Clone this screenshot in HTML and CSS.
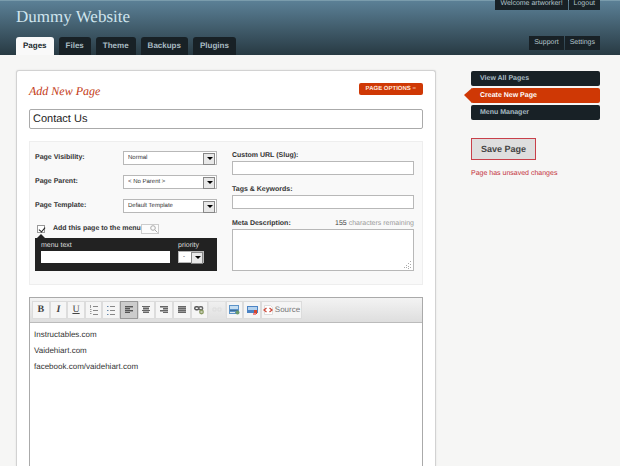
FILE: index.html
```html
<!DOCTYPE html>
<html lang="en">
<head>
    <meta charset="UTF-8" />
    <title>Dummy Website</title>
    <meta name="viewport" content="width=device-width, initial-scale=1.0" />
    <link rel="stylesheet" href="styles.css">
</head>
<body>

    <header class="header">
        <div class="header-row">
            <h1>Dummy Website</h1>
            <nav class="user-nav" aria-label="Account">
                <a href="#">Welcome artworker!</a>
                <a href="#">Logout</a>
            </nav>
        </div>
        <div class="header-row header-bottom">
            <nav class="tabs" aria-label="Main">
                <a href="#" class="active">Pages</a>
                <a href="#">Files</a>
                <a href="#">Theme</a>
                <a href="#">Backups</a>
                <a href="#">Plugins</a>
            </nav>
            <nav class="user-nav tools-nav" aria-label="Tools">
                <a href="#">Support</a>
                <a href="#">Settings</a>
            </nav>
        </div>
    </header>

    <div class="wrapper">
        <main class="card">
            <div class="card-head">
                <h2>Add New Page</h2>
                <button type="button" class="options-btn">PAGE OPTIONS &minus;</button>
            </div>

            <input type="text" class="page-title" aria-label="Page title" value="Contact Us" />

            <div class="options">
                <div class="column">
                    <div class="field-row">
                        <label for="visibility">Page Visibility:</label>
                        <span class="select"><select id="visibility"><option>Normal</option></select></span>
                    </div>
                    <div class="field-row">
                        <label for="parent">Page Parent:</label>
                        <span class="select"><select id="parent"><option>&lt; No Parent &gt;</option></select></span>
                    </div>
                    <div class="field-row">
                        <label for="template">Page Template:</label>
                        <span class="select"><select id="template"><option>Default Template</option></select></span>
                    </div>
                    <div class="menu-check">
                        <input type="checkbox" id="inMenu" checked />
                        <label for="inMenu">Add this page to the menu</label>
                        <button type="button" class="search-btn" aria-label="Search">
                            <svg width="8" height="8" viewBox="0 0 8 8" fill="none" stroke="#aaa"><circle cx="3" cy="3" r="2.3" /><path d="M4.8 4.8 7.5 7.5" /></svg>
                        </button>
                    </div>
                    <div class="menu-box">
                        <div class="menu-text">
                            <label for="menuText">menu text</label>
                            <input type="text" id="menuText" />
                        </div>
                        <div class="menu-priority">
                            <label for="priority">priority</label>
                            <span class="select small"><select id="priority"><option>-</option></select></span>
                        </div>
                    </div>
                </div>

                <div class="column">
                    <div class="field">
                        <label for="slug">Custom URL (Slug):</label>
                        <input type="text" id="slug" />
                    </div>
                    <div class="field">
                        <label for="tags">Tags &amp; Keywords:</label>
                        <input type="text" id="tags" />
                    </div>
                    <div class="field">
                        <div class="field-head">
                            <label for="meta">Meta Description:</label>
                            <span class="counter"><b>155</b> characters remaining</span>
                        </div>
                        <div class="area">
                            <textarea id="meta"></textarea>
                            <svg class="grip" width="8" height="8" viewBox="0 0 8 8" fill="#aaa"><path d="M6 0h1v1H6zM4 2h1v1H4zM6 3h1v1H6zM2 4h1v1H2zM4 5h1v1H4zM6 6h1v1H6zM2 6h1v1H2zM0 6h1v1H0zM4 7h1v1H4z" /></svg>
                        </div>
                    </div>
                </div>
            </div>

            <div class="editor">
                <div class="toolbar">
                    <div class="tool-group">
                        <button type="button" class="bold">B</button>
                        <button type="button" class="italic">I</button>
                        <button type="button" class="underline">U</button>
                        <button type="button" aria-label="Numbered list">
                            <svg width="10" height="10" viewBox="0 0 10 10" stroke="#888"><path d="M4 1.5h5M4 5.5h5M4 9.5h5" /><path stroke="#999" d="M1.5 0v3M1 4.5h1.5M1 6.5h1.5M1 8.5h1.5" /></svg>
                        </button>
                        <button type="button" aria-label="Bulleted list">
                            <svg width="10" height="10" viewBox="0 0 10 10" stroke="#888"><path d="M4 1.5h5M4 5.5h5M4 9.5h5" /><path stroke="#68a" d="M1 1.5h1.5M1 5.5h1.5M1 9.5h1.5" /></svg>
                        </button>
                        <button type="button" class="pressed" aria-label="Align left">
                            <svg width="8" height="8" viewBox="0 0 8 8" stroke="#555"><path d="M0 .5h8M0 2.5h5M0 4.5h8M0 6.5h5" /><path stroke="#999" d="M0 1.5h8M0 3.5h5M0 5.5h8" /></svg>
                        </button>
                        <button type="button" aria-label="Align center">
                            <svg width="8" height="8" viewBox="0 0 8 8" stroke="#666"><path d="M0 .5h8M1 2.5h6M0 4.5h8M1 6.5h6" /><path stroke="#aaa" d="M1 1.5h6M1 3.5h6M1 5.5h6" /></svg>
                        </button>
                        <button type="button" aria-label="Align right">
                            <svg width="8" height="8" viewBox="0 0 8 8" stroke="#666"><path d="M0 .5h8M3 2.5h5M0 4.5h8M3 6.5h5" /><path stroke="#aaa" d="M0 1.5h8M3 3.5h5M0 5.5h8" /></svg>
                        </button>
                        <button type="button" aria-label="Justify">
                            <svg width="8" height="8" viewBox="0 0 8 8" stroke="#666"><path d="M0 .5h8M0 2.5h8M0 4.5h8M0 6.5h8" /><path stroke="#999" d="M0 1.5h8M0 3.5h8M0 5.5h8" /></svg>
                        </button>
                        <button type="button" aria-label="Link">
                            <svg width="10" height="10" viewBox="0 0 10 10" fill="none"><rect x=".7" y="1.7" width="4" height="3" rx="1.5" stroke="#555" stroke-width="1.4" /><rect x="4.7" y="1.7" width="4" height="3" rx="1.5" stroke="#666" stroke-width="1.4" /><circle cx="7.5" cy="7" r="2.4" fill="#8a9a62" /><path d="M6.5 7h2" stroke="#fff" /></svg>
                        </button>
                        <button type="button" class="off" aria-label="Unlink" disabled>
                            <svg width="10" height="10" viewBox="0 0 10 10" fill="none" stroke="#ddd"><path d="M1 3h3v3H1zM6 3h3v3H6z" /></svg>
                        </button>
                        <button type="button" aria-label="Image">
                            <svg width="11" height="10" viewBox="0 0 11 10"><path fill="#5c93c8" d="M0 0h10v9H0z" /><path fill="#c5def2" d="M1 1h8v3H1z" /><path fill="#3f6c98" d="M1 5h8v1H1z" /><path fill="#dfe9ee" d="M1 7h5v1H1z" /><circle cx="8.5" cy="7.5" r="2" fill="#6c9a6c" /></svg>
                        </button>
                        <button type="button" aria-label="Remove image">
                            <svg width="11" height="10" viewBox="0 0 11 10"><path fill="#4b83c4" d="M0 1h11v7H0z" /><path fill="#b4d2ee" d="M1 2h9v3H1z" /><path fill="#d5452c" d="M7 5h3v4H7z" /><path fill="#e88" d="M6 8h3v2H6z" /></svg>
                        </button>
                    </div>
                    <button type="button" class="source">
                        <svg width="11" height="10" viewBox="0 0 11 10" fill="none"><path d="M1.5.5h6l2 2v7h-8z" fill="#fff" stroke="#ddd" /><path d="M3.5 3 1 5l2.5 2M6.5 3 9 5 6.5 7" stroke="#cf4b3c" stroke-width="1.3" /></svg>
                        Source
                    </button>
                </div>
                <div class="content" contenteditable="true" spellcheck="false">
                    <p>Instructables.com</p>
                    <p>Vaidehiart.com</p>
                    <p>facebook.com/vaidehiart.com</p>
                </div>
            </div>
        </main>

        <aside class="sidebar">
            <nav class="side-nav" aria-label="Pages">
                <a href="#">View All Pages</a>
                <a href="#" class="active">Create New Page</a>
                <a href="#">Menu Manager</a>
            </nav>
            <button type="submit" class="save">Save Page</button>
            <p class="notice">Page has unsaved changes</p>
        </aside>
    </div>

</body>
</html>
```

FILE: styles.css
```css
:root {
    --dark: #182126;
    --accent: #cf3805;
    --line: #b8b8b8;
}

* {
    box-sizing: border-box;
    margin: 0;
    padding: 0;
}

body {
    font: 7px/10px "Liberation Sans", Arial, sans-serif;
    text-rendering: geometricPrecision;
    background: #f6f6f5;
    color: #333;
    min-height: 100vh;
    display: flex;
    flex-direction: column;
}

a {
    text-decoration: none;
}

input,
select,
textarea,
button {
    font: inherit;
    color: inherit;
    text-rendering: inherit;
    border-radius: 0;
}

button {
    cursor: pointer;
}

/* Header */
.header {
    height: 55px;
    padding: 0 20px 0 16px;
    background: linear-gradient(#5b8096, #283a43);
    border-top: 1px solid #7a9cac;
    display: flex;
    flex-direction: column;
    justify-content: space-between;
}

.header-row {
    display: flex;
    justify-content: space-between;
    align-items: flex-start;
}

h1 {
    font: 17px/32px "Liberation Serif", Georgia, serif;
    color: #d0e5ee;
}

.user-nav {
    display: flex;
    gap: 1px;
    margin-top: -4px;
}

.user-nav a {
    height: 13px;
    padding: 0 5px;
    line-height: 13px;
    background: var(--dark);
    color: #b4c5cc;
}

.header-bottom {
    align-items: flex-end;
}

.tools-nav {
    margin-bottom: 5px;
}

.tools-nav a {
    height: 14px;
    line-height: 14px;
}

.tabs {
    display: flex;
    gap: 5px;
}

.tabs a {
    height: 18px;
    padding: 0 7px;
    font-size: 8px;
    font-weight: bold;
    line-height: 18px;
    background: var(--dark);
    color: #a9bcc3;
    border-radius: 3px 3px 0 0;
}

.tabs .active {
    background: #f9f9f9;
    color: #20292d;
}

/* Layout */
.wrapper {
    flex: 1;
    display: flex;
    gap: 35px;
    padding: 15px 20px 0 16px;
}

.card {
    flex: 1;
    display: flex;
    flex-direction: column;
    background: #fff;
    border: 1px solid #d2d2d2;
    border-bottom: none;
    border-radius: 3px 3px 0 0;
    padding: 12px 12px 0;
    box-shadow: 0 0 2px rgba(0, 0, 0, 0.1);
}

.card-head {
    display: flex;
    justify-content: space-between;
    align-items: flex-start;
}

h2 {
    font: italic 12px/16px "Liberation Serif", Georgia, serif;
    color: #c33b16;
}

.options-btn {
    height: 12px;
    padding: 0 7px;
    font-size: 6px;
    font-weight: bold;
    line-height: 12px;
    background: var(--accent);
    color: #ffe9df;
    border: none;
    border-radius: 2px;
}

.page-title {
    width: 100%;
    height: 20px;
    margin: 10px 0 12px;
    padding: 0 3px;
    font-size: 11px;
    color: #222;
    border: 1px solid #aaa;
    border-radius: 2px;
    background: #fff;
}

/* Page options */
.options {
    display: grid;
    grid-template-columns: 1fr 1fr;
    gap: 15px;
    padding: 9px 8px 13px 5px;
    background: #f9f9f9;
    border: 1px solid #eee;
}

.options label {
    font-weight: bold;
}

.field-row {
    display: flex;
    justify-content: space-between;
    align-items: center;
    margin-bottom: 10px;
}

.select {
    position: relative;
    display: block;
    width: 94px;
    height: 14px;
}

.select select {
    appearance: none;
    width: 100%;
    height: 100%;
    padding: 0 4px;
    font-size: 6px;
    background: #fff;
    border: 1px solid var(--line);
    display: block;
}

.select::before {
    content: "";
    position: absolute;
    top: 2px;
    right: 2px;
    width: 10px;
    height: 10px;
    background: #e8e8e8;
    border: 1px solid #888;
    pointer-events: none;
}

.select::after {
    content: "";
    position: absolute;
    top: 6px;
    right: 4px;
    border: 3px solid transparent;
    border-top-color: #000;
    border-bottom: none;
    pointer-events: none;
}

.menu-check {
    display: flex;
    align-items: center;
    height: 12px;
    margin: 0 0 3px 2px;
}

.menu-check input {
    appearance: none;
    width: 8px;
    height: 8px;
    margin-right: 8px;
    background: #fff;
    border: 1px solid #999;
}

.menu-check input:checked::before {
    content: "";
    display: block;
    width: 3px;
    height: 5px;
    margin-left: 2px;
    border: solid #222;
    border-width: 0 1px 1px 0;
    transform: rotate(40deg);
}

.search-btn {
    width: 18px;
    height: 10px;
    background: #fcfcfc;
    border: 1px solid #ccc;
    display: flex;
    align-items: center;
    justify-content: flex-end;
}

.menu-box {
    position: relative;
    display: flex;
    gap: 8px;
    height: 33px;
    padding: 3px 13px 0 6px;
    background: #222;
    color: #ddd;
}

.menu-box::before {
    content: "";
    position: absolute;
    top: -4px;
    left: 2px;
    border: 4px solid transparent;
    border-top: none;
    border-bottom-color: #222;
}

.menu-box label {
    display: block;
    font-weight: normal;
}

.menu-text {
    flex: 1;
}

.menu-text input {
    width: 100%;
    height: 12px;
    padding: 0 3px;
    background: #fff;
    color: #333;
    border: none;
    display: block;
}

.select.small {
    width: 26px;
    height: 12px;
    color: #333;
}

.select.small::before {
    top: 1px;
    right: 1px;
}

.select.small::after {
    top: 5px;
    right: 3px;
}

.field {
    margin-bottom: 10px;
}

.field:last-child {
    margin-bottom: 0;
}

.field label {
    display: block;
}

.field > input,
.field textarea {
    width: 100%;
    height: 14px;
    padding: 0 3px;
    background: #fff;
    border: 1px solid var(--line);
    display: block;
}

.field-head {
    display: flex;
    justify-content: space-between;
}

.counter {
    color: #999;
}

.counter b {
    font-weight: normal;
    color: #444;
}

.area {
    position: relative;
}

.field textarea {
    height: 42px;
    resize: none;
}

.grip {
    position: absolute;
    right: 2px;
    bottom: 2px;
}

/* Editor */
.editor {
    flex: 1;
    display: flex;
    flex-direction: column;
    margin-top: 12px;
    border: 1px solid #aaa;
    border-bottom: none;
}

.toolbar {
    display: flex;
    align-items: center;
    height: 25px;
    padding: 0 2px;
    background: linear-gradient(#f3f3f3, #dedede);
    border-bottom: 1px solid #bbb;
}

.tool-group {
    width: 229px;
    display: grid;
    grid-template-columns: repeat(13, 1fr);
}

.toolbar button {
    height: 18px;
    background: #f5f5f5;
    border: 1px solid #dcdcdc;
    display: flex;
    align-items: center;
    justify-content: center;
}

.toolbar .bold,
.toolbar .italic,
.toolbar .underline {
    font: bold 10px/10px "Liberation Serif", serif;
    color: #444;
}

.toolbar .italic {
    font-style: italic;
}

.toolbar .underline {
    font-weight: normal;
    text-decoration: underline;
}

.toolbar .pressed {
    background: #ccc;
    border-color: #999;
}

.toolbar .off {
    background: none;
    border-color: #e2e2e2;
}

.toolbar .source {
    width: 41px;
    gap: 1px;
    font-size: 8px;
    color: #777;
}

.content {
    flex: 1;
    padding: 7px 4px;
    font-size: 8px;
    outline: none;
}

.content p {
    margin-bottom: 6px;
}

/* Sidebar */
.sidebar {
    width: 129px;
    padding-top: 1px;
}

.side-nav {
    display: flex;
    flex-direction: column;
    gap: 2px;
    margin-bottom: 18px;
}

.side-nav a {
    position: relative;
    height: 15px;
    padding-left: 9px;
    font-weight: bold;
    line-height: 15px;
    background: var(--dark);
    color: #a9bcc3;
    border-radius: 2px;
}

.side-nav .active {
    background: var(--accent);
    color: #fff;
}

.side-nav .active::before {
    content: "";
    position: absolute;
    top: 0;
    left: -7px;
    border: solid transparent;
    border-width: 7px 8px 8px 0;
    border-right-color: var(--accent);
}

.save {
    width: 65px;
    height: 22px;
    font-size: 9px;
    font-weight: bold;
    color: #444;
    background: #dedede;
    border: 1px solid #c8404a;
}

.notice {
    margin-top: 9px;
    color: #c4303a;
}
```
